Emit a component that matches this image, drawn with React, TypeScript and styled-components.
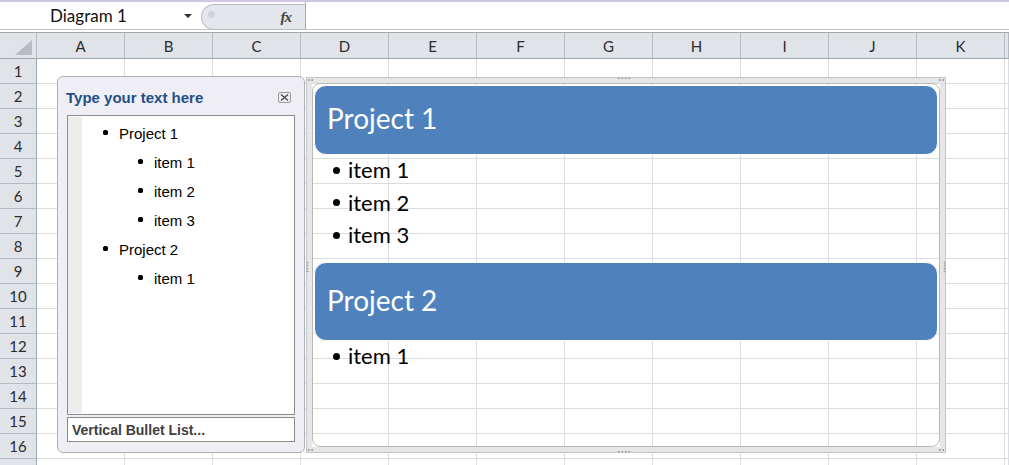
import React from "react";
import styled, { createGlobalStyle } from "styled-components";

const GlobalStyle = createGlobalStyle`
  html, body {
    margin: 0;
    padding: 0;
    background: #ffffff;
    overflow: hidden;
  }
  body {
    font-family: Lato, "Liberation Sans", sans-serif;
    color: #000;
  }
`;

// the last column and row are only a sliver at the window edge, so they get no label
const COLUMNS = ["A", "B", "C", "D", "E", "F", "G", "H", "I", "J", "K", ""];
const ROW_COUNT = 17;
const LABELLED_ROWS = 16;

const Page = styled.div`
  width: 1009px;
  height: 465px;
  overflow: hidden;
`;

/* ---------- formula bar ---------- */

const FormulaBar = styled.div`
  height: 33px;
  box-sizing: border-box;
  border-top: 2px solid #cfc6e4;
  border-bottom: 1px solid #a7a7a7;
  display: flex;
  flex-direction: column;
`;

const BarRow = styled.div`
  height: 27px;
  display: flex;
  align-items: stretch;
  border-bottom: 1px solid #c3c3c3;
  margin-bottom: 2px;
`;

const NameBox = styled.div`
  width: 201px;
  display: flex;
  align-items: center;
  padding-left: 50px;
  box-sizing: border-box;
  font-size: 17px;
  color: #111;
`;

const NameText = styled.span`
  flex: 1;
`;

const DropArrow = styled.span`
  width: 0;
  height: 0;
  margin-right: 9px;
  border-left: 4px solid transparent;
  border-right: 4px solid transparent;
  border-top: 4px solid #333;
`;

const FxPill = styled.div`
  width: 104px;
  height: 26px;
  margin-top: 2px;
  box-sizing: border-box;
  background: #e3e6ea;
  border: 1px solid #b9bdc3;
  border-right: none;
  border-radius: 13px 0 0 13px;
  display: flex;
  align-items: center;
  justify-content: space-between;
  padding: 0 14px 0 6px;
`;

const Knob = styled.span`
  width: 7px;
  height: 7px;
  border-radius: 50%;
  background: #cfd2d6;
  margin-top: -6px;
`;

const Fx = styled.span`
  font-family: "Liberation Serif", serif;
  font-style: italic;
  font-weight: bold;
  font-size: 15px;
  color: #444;
  letter-spacing: -1px;
`;

const FormulaInput = styled.div`
  flex: 1;
  border-left: 1px solid #a9a9a9;
  background: #fff;
`;

/* ---------- sheet grid ---------- */

const Sheet = styled.div`
  position: relative;
  display: grid;
  grid-template-columns: 37px repeat(11, 88px) 1fr;
  grid-template-rows: 26px repeat(${ROW_COUNT}, 25px);
`;

type CellKind = "corner" | "col" | "row" | "cell";

const Cell = styled.div<{ $kind: CellKind }>`
  box-sizing: border-box;
  position: relative;
  display: flex;
  align-items: center;
  justify-content: center;
  font-size: 15px;
  color: #2b2b2b;
  background: ${(p) => (p.$kind === "cell" ? "#ffffff" : "#e0e4e9")};
  border-right: 1px solid
    ${(p) => (p.$kind === "cell" ? "#dadcdd" : p.$kind === "row" ? "#9ea6ae" : "#b3b9bf")};
  border-bottom: 1px solid
    ${(p) => (p.$kind === "cell" ? "#dadcdd" : p.$kind === "col" || p.$kind === "corner" ? "#9ea6ae" : "#b3b9bf")};
`;

const CornerTriangle = styled.span`
  position: absolute;
  right: 4px;
  bottom: 3px;
  width: 0;
  height: 0;
  border-left: 17px solid transparent;
  border-bottom: 15px solid #b7bcc2;
`;

/* ---------- text pane ---------- */

const TextPane = styled.div`
  position: absolute;
  left: 57px;
  top: 43px;
  width: 248px;
  height: 377px;
  box-sizing: border-box;
  border: 1px solid #a8b1bc;
  border-radius: 6px;
  background: #eeeef4;
  padding: 0 9px 0 9px;
  display: flex;
  flex-direction: column;
`;

const PaneHeader = styled.div`
  height: 38px;
  display: flex;
  align-items: center;
  justify-content: space-between;
  padding: 2px 4px 0 0;
  box-sizing: border-box;
`;

const PaneTitle = styled.span`
  font-family: "Liberation Sans", sans-serif;
  font-weight: bold;
  font-size: 15px;
  color: #1f5089;
  margin-left: -1px;
`;

const ListBox = styled.div`
  height: 300px;
  box-sizing: border-box;
  border: 1px solid #8c8c8c;
  background: #ffffff;
  display: flex;
`;

const Gutter = styled.div`
  width: 14px;
  background: #ececec;
  margin: 1px 0;
`;

const OutlineList = styled.ul`
  list-style: none;
  margin: 0;
  padding: 3px 0 0 0;
  flex: 1;
`;

const OutlineItem = styled.li<{ $level: number }>`
  height: 29px;
  display: flex;
  align-items: center;
  padding-left: ${(p) => (p.$level === 1 ? 21 : 56)}px;
  font-family: "Liberation Sans", sans-serif;
  font-size: 15px;
  color: #000;
`;

const Dot = styled.span`
  width: 5px;
  height: 5px;
  border-radius: 50%;
  background: #000;
  box-shadow: 0 0 0.6px #000;
  margin-right: 11px;
  margin-top: -3px;
`;

const LayoutBox = styled.div`
  margin-top: 2px;
  height: 25px;
  box-sizing: border-box;
  border: 1px solid #8c8c8c;
  background: #fff;
  display: flex;
  align-items: center;
  padding-left: 4px;
  font-family: "Liberation Sans", sans-serif;
  font-weight: bold;
  font-size: 14px;
  color: #3e3e3e;
`;

/* ---------- diagram ---------- */

const DiagramFrame = styled.div`
  position: absolute;
  left: 306px;
  top: 44px;
  width: 640px;
  height: 376px;
  box-sizing: border-box;
  border: 1px solid #c4c4c4;
`;

const FrameBand = styled.div`
  height: 100%;
  box-sizing: border-box;
  border: 5px solid #e6e6e6;
`;

const Canvas = styled.div`
  height: 100%;
  box-sizing: border-box;
  border: 1px solid #b9b9b9;
  border-radius: 8px;
  padding: 0 1px;
  display: flex;
  flex-direction: column;
`;

const ShapeBox = styled.div<{ $h: number; $gap: number }>`
  height: ${(p) => p.$h}px;
  margin-top: ${(p) => p.$gap}px;
  flex-shrink: 0;
  box-sizing: border-box;
  background: #4f81bd;
  border: 1px solid #ffffff;
  border-radius: 12px;
  display: flex;
  align-items: center;
  padding: 0 0 4px 12px;
  font-size: 28px;
  color: #ffffff;
`;

const ItemList = styled.ul`
  list-style: none;
  margin: 0;
  padding: 0 0 0 19px;
`;

const DiagramItem = styled.li`
  height: 32.5px;
  display: flex;
  align-items: center;
  padding-bottom: 3px;
  box-sizing: border-box;
  font-size: 22px;
  color: #000;
`;

const BigDot = styled.span`
  width: 7px;
  height: 7px;
  border-radius: 50%;
  background: #000;
  margin-right: 8px;
  margin-top: 1px;
`;

type HandleSpot = "top" | "bottom" | "left" | "right";

const Handle = styled.span<{ $spot: HandleSpot }>`
  position: absolute;
  background-image: radial-gradient(circle, #9a9a9a 0.8px, transparent 1.1px);
  ${(p) =>
    p.$spot === "top" || p.$spot === "bottom"
      ? `left: 310px; width: 14px; height: 3px; ${p.$spot}: -1px; background-size: 3.5px 3px;`
      : `top: 183px; width: 3px; height: 12px; ${p.$spot}: -1px; background-size: 3px 3px;`}
`;

const CornerDots = styled.span<{ $v: "top" | "bottom"; $h: "left" | "right" }>`
  position: absolute;
  ${(p) => p.$v}: 0px;
  ${(p) => p.$h}: 0px;
  width: 7px;
  height: 4px;
  background-image: radial-gradient(circle, #a0a0a0 0.8px, transparent 1.1px);
  background-size: 3.5px 4px;
`;

const CloseIcon = () => (
  <svg width="13" height="11" viewBox="0 0 13 11">
    <rect x="0.5" y="0.5" width="12" height="10" rx="1.5" fill="none" stroke="#9a9a9a" strokeWidth="1" />
    <path d="M3 2.5l7 6M10 2.5l-7 6" stroke="#4a4a4a" strokeWidth="1.4" fill="none" />
  </svg>
);

const outline = [
  { level: 1, text: "Project 1" },
  { level: 2, text: "item 1" },
  { level: 2, text: "item 2" },
  { level: 2, text: "item 3" },
  { level: 1, text: "Project 2" },
  { level: 2, text: "item 1" },
];

const groups = [
  { title: "Project 1", items: ["item 1", "item 2", "item 3"], h: 70, gap: 1 },
  { title: "Project 2", items: ["item 1"], h: 79, gap: 9.5 },
];

export default function App() {
  const cells: React.ReactNode[] = [];
  cells.push(
    <Cell key="corner" $kind="corner">
      <CornerTriangle />
    </Cell>
  );
  COLUMNS.forEach((c, i) =>
    cells.push(
      <Cell key={"h" + i} $kind="col">
        {c}
      </Cell>
    )
  );
  for (let r = 1; r <= ROW_COUNT; r++) {
    cells.push(
      <Cell key={"r" + r} $kind="row">
        {r <= LABELLED_ROWS ? r : ""}
      </Cell>
    );
    COLUMNS.forEach((_, i) => cells.push(<Cell key={i + "-" + r} $kind="cell" />));
  }

  return (
    <Page>
      <GlobalStyle />
      <FormulaBar>
        <BarRow>
          <NameBox>
            <NameText>Diagram 1</NameText>
            <DropArrow />
          </NameBox>
          <FxPill>
            <Knob />
            <Fx>fx</Fx>
          </FxPill>
          <FormulaInput />
        </BarRow>
      </FormulaBar>

      <Sheet>
        {cells}

        <TextPane>
          <PaneHeader>
            <PaneTitle>Type your text here</PaneTitle>
            <CloseIcon />
          </PaneHeader>
          <ListBox>
            <Gutter />
            <OutlineList>
              {outline.map((o, i) => (
                <OutlineItem key={i} $level={o.level}>
                  <Dot />
                  {o.text}
                </OutlineItem>
              ))}
            </OutlineList>
          </ListBox>
          <LayoutBox>Vertical Bullet List...</LayoutBox>
        </TextPane>

        <DiagramFrame>
          <FrameBand>
            <Canvas>
              {groups.map((g) => (
                <React.Fragment key={g.title}>
                  <ShapeBox $h={g.h} $gap={g.gap}>
                    {g.title}
                  </ShapeBox>
                  <ItemList>
                    {g.items.map((it) => (
                      <DiagramItem key={it}>
                        <BigDot />
                        {it}
                      </DiagramItem>
                    ))}
                  </ItemList>
                </React.Fragment>
              ))}
            </Canvas>
          </FrameBand>
          <Handle $spot="top" />
          <Handle $spot="bottom" />
          <Handle $spot="left" />
          <Handle $spot="right" />
          <CornerDots $v="top" $h="left" />
          <CornerDots $v="top" $h="right" />
          <CornerDots $v="bottom" $h="left" />
          <CornerDots $v="bottom" $h="right" />
        </DiagramFrame>
      </Sheet>
    </Page>
  );
}
